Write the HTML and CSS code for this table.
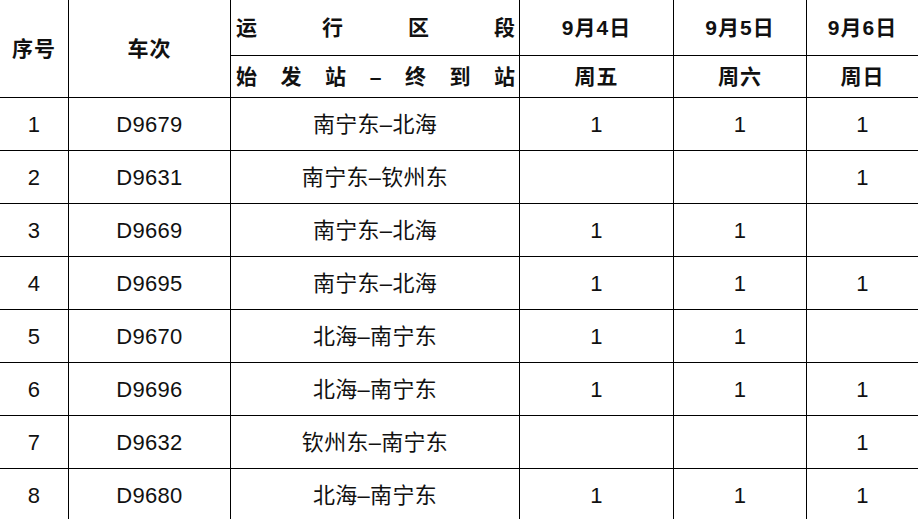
FILE: index.html
```html
<!DOCTYPE html>
<html lang="zh-CN">
<head>
<meta charset="utf-8">
<title>列车开行表</title>
<link rel="stylesheet" href="styles.css">
</head>
<body>
<div class="grid">
  <div class="cell head span2">序号</div>
  <div class="cell head span2">车次</div>
  <div class="cell head spread"><span>运</span><span>行</span><span>区</span><span>段</span></div>
  <div class="cell head">9月4日</div>
  <div class="cell head">9月5日</div>
  <div class="cell head">9月6日</div>
  <div class="cell head spread"><span>始</span><span>发</span><span>站</span><span>–</span><span>终</span><span>到</span><span>站</span></div>
  <div class="cell head">周五</div>
  <div class="cell head">周六</div>
  <div class="cell head">周日</div>

  <div class="cell">1</div><div class="cell">D9679</div><div class="cell">南宁东–北海</div><div class="cell">1</div><div class="cell">1</div><div class="cell">1</div>
  <div class="cell">2</div><div class="cell">D9631</div><div class="cell">南宁东–钦州东</div><div class="cell"></div><div class="cell"></div><div class="cell">1</div>
  <div class="cell">3</div><div class="cell">D9669</div><div class="cell">南宁东–北海</div><div class="cell">1</div><div class="cell">1</div><div class="cell"></div>
  <div class="cell">4</div><div class="cell">D9695</div><div class="cell">南宁东–北海</div><div class="cell">1</div><div class="cell">1</div><div class="cell">1</div>
  <div class="cell">5</div><div class="cell">D9670</div><div class="cell">北海–南宁东</div><div class="cell">1</div><div class="cell">1</div><div class="cell"></div>
  <div class="cell">6</div><div class="cell">D9696</div><div class="cell">北海–南宁东</div><div class="cell">1</div><div class="cell">1</div><div class="cell">1</div>
  <div class="cell">7</div><div class="cell">D9632</div><div class="cell">钦州东–南宁东</div><div class="cell"></div><div class="cell"></div><div class="cell">1</div>
  <div class="cell">8</div><div class="cell">D9680</div><div class="cell">北海–南宁东</div><div class="cell">1</div><div class="cell">1</div><div class="cell">1</div>
</div>
</body>
</html>
```

FILE: styles.css
```css
html, body {
  margin: 0;
  padding: 0;
  background: #fff;
  overflow: hidden;
}
body {
  width: 918px;
  height: 519px;
  font-family: "Liberation Sans", "Noto Sans CJK SC", sans-serif;
  color: #111;
}
.grid {
  display: grid;
  grid-template-columns: 68px 161px 288px 153px 132px 111px;
  grid-template-rows: 55px 41px repeat(8, 52px);
  gap: 1px;
  background: #000;
  width: 918px;
}
.cell {
  background: #fff;
  display: flex;
  align-items: center;
  justify-content: center;
  font-size: 22px;
  line-height: 1;
  padding-top: 2px;
  letter-spacing: 0.3px;
}
.head {
  font-weight: bold;
  font-size: 21px;
  letter-spacing: 1px;
  padding-top: 0;
}
.span2 {
  grid-row: span 2;
}
.spread {
  justify-content: space-between;
  padding: 0 4px 0 5px;
  letter-spacing: 0;
}
```
